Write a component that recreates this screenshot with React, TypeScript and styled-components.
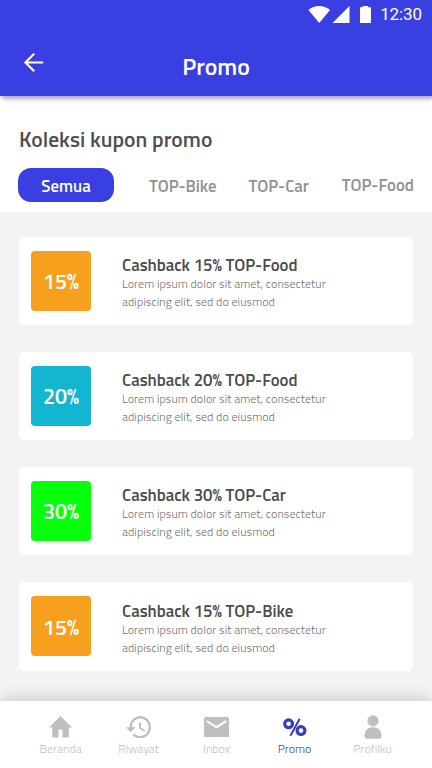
import React from 'react';
import styled, { createGlobalStyle } from 'styled-components';

const GlobalStyle = createGlobalStyle`
  *, *::before, *::after { box-sizing: border-box; }
  body {
    margin: 0;
    background: #f3f3f3;
    font-family: 'Titillium Web', Roboto, 'Noto Sans', sans-serif;
  }
  h1, h2, h3, p { margin: 0; }
  button { border: 0; padding: 0; background: none; font-family: inherit; }
  svg { display: block; }
`;

const Screen = styled.div`
  width: 432px;
  height: 768px;
  display: flex;
  flex-direction: column;
  overflow: hidden;
  background: #f3f3f3;
`;

const Header = styled.header`
  flex: none;
  height: 96px;
  background: #393fe0;
  color: #fff;
  z-index: 1;
  box-shadow: 2px 3px 4px rgba(40, 30, 110, 0.38);
`;

const StatusBar = styled.div`
  height: 28px;
  padding: 0 9px 0 308px;
  display: flex;
  align-items: center;
`;

const Clock = styled.span`
  margin-left: auto;
  padding-right: 1px;
  font: 400 17px/26px Roboto, sans-serif;
  letter-spacing: -0.1px;
`;

const AppBar = styled.div`
  height: 68px;
  display: grid;
  grid-template-columns: 80px 272px 80px;
`;

const BackButton = styled.button`
  height: 34px;
  margin-top: 17px;
  padding-left: 23px;
  display: flex;
  align-items: center;
  color: #fff;
`;

const PageTitle = styled.h1`
  padding-top: 24px;
  text-align: center;
  font-size: 23.8px;
  font-weight: 600;
  line-height: 28px;
`;

const Filters = styled.section`
  flex: none;
  height: 116px;
  padding: 29px 18px 0;
  background: #fff;
`;

const SectionTitle = styled.h2`
  padding-left: 1px;
  font-size: 21.6px;
  font-weight: 600;
  line-height: 28px;
  color: #505050;
  white-space: nowrap;
`;

const TabRow = styled.div`
  margin-top: 15px;
  display: flex;
`;

const Tab = styled.button<{ $active?: boolean; $gap: number; $raise?: number }>`
  height: 34px;
  width: ${(p) => (p.$active ? '96px' : 'auto')};
  margin-left: ${(p) => p.$gap}px;
  padding: 2px 0 ${(p) => (p.$raise ?? 0) * 2}px;
  border-radius: 13px;
  background: ${(p) => (p.$active ? '#393fe0' : 'transparent')};
  color: ${(p) => (p.$active ? '#fff' : '#929292')};
  font-size: 16.8px;
  font-weight: 600;
  line-height: 26px;
  white-space: nowrap;
`;

const CouponList = styled.main`
  flex: 1;
  min-height: 0;
  padding: 24.5px 19px 0;
  display: flex;
  flex-direction: column;
  gap: 26.6px;
`;

const Card = styled.article`
  flex: none;
  height: 88.6px;
  padding: 14px 12px;
  display: flex;
  gap: 31px;
  border-radius: 5px;
  background: #fff;
`;

const Discount = styled.div<{ $color: string }>`
  flex: none;
  width: 60px;
  height: 60px;
  padding-top: 1px;
  display: grid;
  place-items: center;
  border-radius: 4px;
  background: ${(p) => p.$color};
  color: #fff;
  font-size: 21.5px;
  font-weight: 600;
`;

const CardText = styled.div`
  padding-top: 4.6px;
  white-space: nowrap;
`;

const CardTitle = styled.h3`
  font-size: 16.8px;
  font-weight: 600;
  line-height: 20px;
  color: #4c4c4c;
`;

const CardBody = styled.p`
  font-size: 12px;
  font-weight: 300;
  line-height: 18px;
  letter-spacing: 0.05px;
  color: #707070;
`;

const BottomNav = styled.nav`
  flex: none;
  height: 67px;
  padding: 0 20.4px 0 21.6px;
  display: grid;
  grid-template-columns: repeat(5, 78px);
  background: #fff;
  box-shadow: 0 -2px 16px -1px rgba(0, 0, 0, 0.2);
`;

const NavItem = styled.button<{ $active?: boolean }>`
  padding-top: 12px;
  display: flex;
  flex-direction: column;
  align-items: center;
  color: ${(p) => (p.$active ? '#393eb8' : '#bfbfbf')};
`;

const NavIcon = styled.span`
  height: 28px;
  display: flex;
  align-items: center;
`;

const NavLabel = styled.span`
  font-size: 12px;
  font-weight: 300;
  line-height: 16px;
`;

const WifiIcon = () => (
  <svg width="22" height="17" viewBox="0 0 22 17" fill="#fff">
    <path d="M.5 4C6.200-1.200 15.800-1.200 22 4L11.200 17Z" />
  </svg>
);

const SignalIcon = () => (
  <svg width="20" height="17" viewBox="0 0 20 17" fill="#fff">
    <path d="M19.5 0V17H2.5Z" />
  </svg>
);

const BatteryIcon = () => (
  <svg width="21" height="17" viewBox="0 0 21 17" fill="#fff">
    <path d="M10 1.3H12.5V0H18V1.3H21V17H10V1.3Z" />
  </svg>
);

const BackIcon = () => (
  <svg width="22" height="20" viewBox="0 0 22 20" fill="none" stroke="#fff" strokeWidth="2.1">
    <path d="M20.3 10.5H2.5M11.2 1.7L2.4 10.5L11.2 19.3" />
  </svg>
);

const HomeIcon = () => (
  <svg width="23" height="21.500" viewBox="2 3 20 17" preserveAspectRatio="none" fill="currentColor">
    <path d="M10.3 20v-5.500q0-.9 .9-.9h1.600q.9 0 .9 .9v5.500h4.500q1 0 1-1v-7h2.800L12 3 2 12h2.800v7q0 1 1 1z" />
  </svg>
);

const HistoryIcon = () => (
  <svg width="25" height="22.500" viewBox="1 3 21 18" preserveAspectRatio="none" fill="currentColor">
    <path d="M13 3c-4.97 0-9 4.03-9 9H1l3.89 3.89.07.14L9 12H6c0-3.87 3.13-7 7-7s7 3.13 7 7-3.13 7-7 7c-1.93 0-3.68-.79-4.94-2.06l-1.42 1.42C8.27 19.99 10.51 21 13 21c4.97 0 9-4.03 9-9s-4.03-9-9-9zm-1 5v5l4.28 2.54.72-1.21-3.5-2.08V8H12z" />
  </svg>
);

const MailIcon = () => (
  <svg width="25" height="20.500" viewBox="0 0 25 20.500">
    <rect width="25" height="20.500" rx="2" fill="currentColor" />
    <path d="M2.800 4.200L12.500 10.200L22.200 4.200" fill="none" stroke="#fff" strokeWidth="2" />
  </svg>
);

const PercentIcon = () => (
  <svg width="24" height="20" viewBox="0 0 24 20" fill="none" stroke="currentColor">
    <circle cx="5.600" cy="6.800" r="3.900" strokeWidth="3.200" />
    <circle cx="18" cy="13.600" r="3.900" strokeWidth="3.200" />
    <path d="M16.700 1.700L7.400 18.800" strokeWidth="2" />
  </svg>
);

const PersonIcon = () => (
  <svg width="18" height="24" viewBox="0 0 18 24" fill="currentColor">
    <circle cx="9" cy="5.900" r="5.600" />
    <path d="M.5 20.500C.5 15.500 4 12.200 9 12.200S17.500 15.500 17.500 20.500Q17.500 23.700 15 23.700H3Q.5 23.700 .5 20.500Z" />
  </svg>
);

const TABS = [
  { label: 'Semua', gap: 0, active: true },
  { label: 'TOP-Bike', gap: 35 },
  { label: 'TOP-Car', gap: 32 },
  { label: 'TOP-Food', gap: 33, raise: 1 },
];

const COUPONS = [
  { percent: '15%', name: 'TOP-Food', color: '#f7a01d' },
  { percent: '20%', name: 'TOP-Food', color: '#13b6d0' },
  { percent: '30%', name: 'TOP-Car', color: '#06ff0b' },
  { percent: '15%', name: 'TOP-Bike', color: '#f7a01d' },
];

const NAV = [
  { label: 'Beranda', Icon: HomeIcon },
  { label: 'Riwayat', Icon: HistoryIcon },
  { label: 'Inbox', Icon: MailIcon },
  { label: 'Promo', Icon: PercentIcon, active: true },
  { label: 'Profilku', Icon: PersonIcon },
];

export default function App() {
  return (
    <Screen>
      <GlobalStyle />
      <Header>
        <StatusBar>
          <WifiIcon />
          <SignalIcon />
          <BatteryIcon />
          <Clock>12:30</Clock>
        </StatusBar>
        <AppBar>
          <BackButton aria-label="Kembali">
            <BackIcon />
          </BackButton>
          <PageTitle>Promo</PageTitle>
        </AppBar>
      </Header>
      <Filters>
        <SectionTitle>Koleksi kupon promo</SectionTitle>
        <TabRow>
          {TABS.map((t) => (
            <Tab key={t.label} $active={t.active} $gap={t.gap} $raise={t.raise}>
              {t.label}
            </Tab>
          ))}
        </TabRow>
      </Filters>
      <CouponList>
        {COUPONS.map((c, i) => (
          <Card key={i}>
            <Discount $color={c.color}>{c.percent}</Discount>
            <CardText>
              <CardTitle>
                Cashback {c.percent} {c.name}
              </CardTitle>
              <CardBody>
                Lorem ipsum dolor sit amet, consectetur
                <br />
                adipiscing elit, sed do eiusmod
              </CardBody>
            </CardText>
          </Card>
        ))}
      </CouponList>
      <BottomNav>
        {NAV.map(({ label, Icon, active }) => (
          <NavItem key={label} $active={active}>
            <NavIcon>
              <Icon />
            </NavIcon>
            <NavLabel>{label}</NavLabel>
          </NavItem>
        ))}
      </BottomNav>
    </Screen>
  );
}
